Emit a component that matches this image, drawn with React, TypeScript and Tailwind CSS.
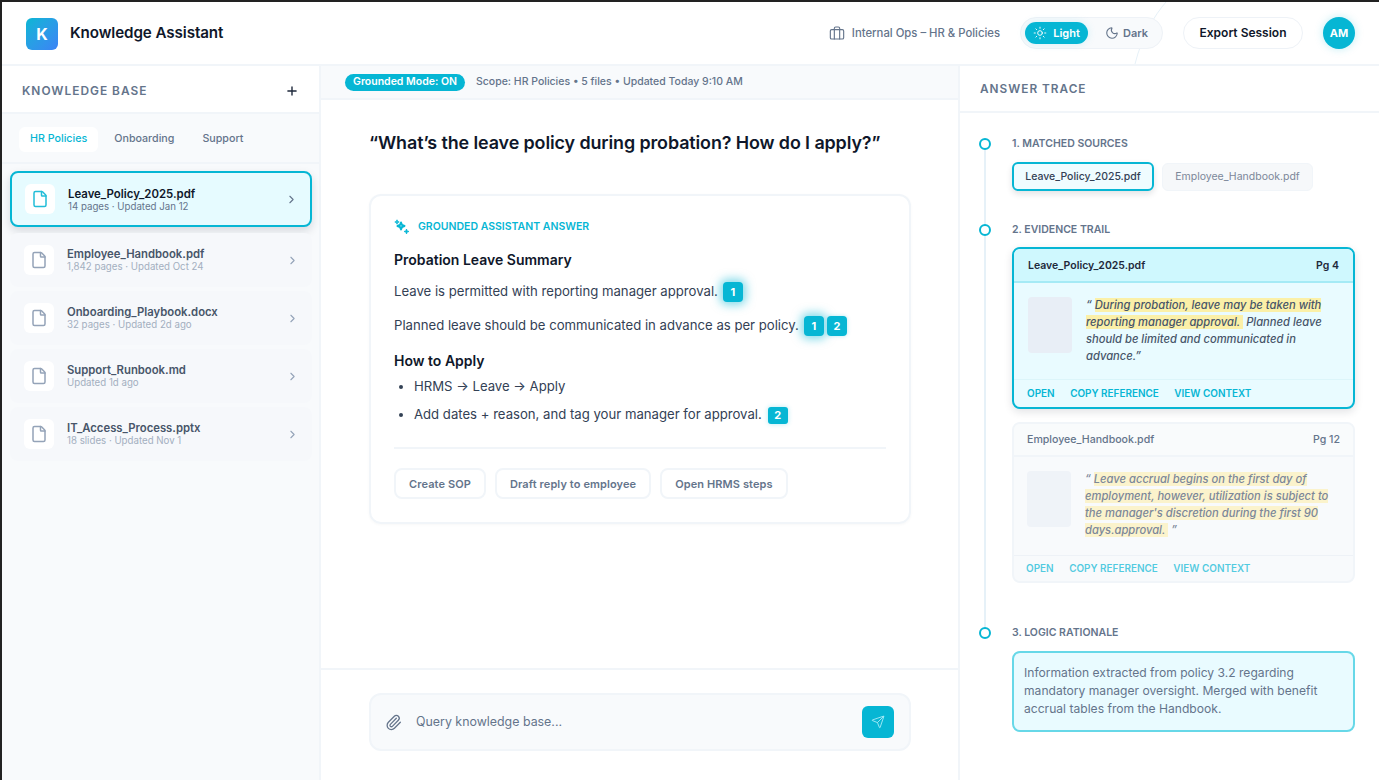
import { ChevronRight, File, Moon, Paperclip, Plus, Send, Sun } from 'lucide-react';

const files = [
  { name: 'Employee_Handbook.pdf', meta: '1,842 pages · Updated Oct 24' },
  { name: 'Onboarding_Playbook.docx', meta: '32 pages · Updated 2d ago' },
  { name: 'Support_Runbook.md', meta: 'Updated 1d ago' },
  { name: 'IT_Access_Process.pptx', meta: '18 slides · Updated Nov 1' },
];

const Cite = ({ n, glow }: { n: number; glow?: boolean }) => (
  <span
    className={`inline-flex items-center justify-center h-[20px] w-[20px] rounded-[4px] bg-[#06b6d4] text-white text-[11px] font-bold ${
      glow ? 'shadow-[0_0_10px_3px_rgba(6,182,212,0.5)]' : 'shadow-[0_0_4px_rgba(6,182,212,0.3)]'
    }`}
  >
    {n}
  </span>
);

const TraceActions = ({ faded }: { faded?: boolean }) => (
  <div className={`flex gap-[15.5px] text-[9.95px] font-semibold ${faded ? 'text-[#06b6d4]/70 border-[#eef2f7] pl-[12px] h-[26px]' : 'text-[#06b6d4] border-[#dcf5fa] pl-[13px] h-[28px]'} border-t items-center`}>
    <span>OPEN</span>
    <span>COPY REFERENCE</span>
    <span>VIEW CONTEXT</span>
  </div>
);

const SparkCluster = () => (
  <svg viewBox="0 0 16 16" className="w-4 h-4 text-[#06b6d4]" fill="none" stroke="currentColor" strokeWidth="2" strokeLinejoin="round">
    <path d="M7 3.5 L8 6 L10.5 7 L8 8 L7 10.5 L6 8 L3.5 7 L6 6 Z" />
    <path d="M3 .8 L3.6 2.4 L5.2 3 L3.6 3.6 L3 5.2 L2.4 3.6 L.8 3 L2.4 2.4 Z" fill="currentColor" strokeWidth="0.8" />
    <path d="M12.5 10 L13.1 11.9 L15 12.5 L13.1 13.1 L12.5 15 L11.9 13.1 L10 12.5 L11.9 11.9 Z" fill="currentColor" strokeWidth="0.8" />
  </svg>
);

const Case = () => (
  <svg viewBox="0 0 24 24" className="w-[16px] h-[16px] text-[#64748b]" fill="none" stroke="currentColor" strokeWidth="1.7" strokeLinecap="round" strokeLinejoin="round">
    <rect x="2" y="7" width="20" height="14" rx="2" />
    <path d="M16 21V5a2 2 0 0 0-2-2h-4a2 2 0 0 0-2 2v16" />
  </svg>
);

export default function App() {
  return (
    <div className="w-[1379px] h-[780px] overflow-hidden bg-white border-t-2 border-l-2 border-[#222] flex flex-col text-[#0f172a] font-['Inter',sans-serif]">
      {/* Header */}
      <header className="relative h-[64px] shrink-0 flex items-center border-b-2 border-[#f1f5f9] pl-6 pr-[24px]">
        {/* faint curve behind the toggle */}
        <svg className="absolute left-[1130px] top-0 w-[40px] h-[62px] pointer-events-none" viewBox="0 0 40 62" fill="none">
          <path d="M34 0 C 22 14 10 34 3 62" stroke="#e6f1f8" strokeWidth="1" />
        </svg>
        <div className="w-8 h-8 mt-[1px] rounded-md bg-gradient-to-br from-[#06b6d4] to-[#3b82f6] flex items-center justify-center text-white font-bold text-base">K</div>
        <div className="ml-3 mt-[1px] text-[15.2px] font-semibold tracking-[-0.1px]">Knowledge Assistant</div>
        <div className="ml-auto flex items-center">
          <Case />
          <span className="ml-[7px] text-[11.3px] font-medium text-[#64748b]">Internal Ops – HR &amp; Policies</span>
          <div className="relative ml-5 h-8 w-[143px] rounded-full bg-[#f8fafc] border border-[#eef2f7] flex items-center px-1 text-[11px] font-semibold">
            <div className="h-[22px] w-[63px] rounded-full bg-[#06b6d4] text-white flex items-center justify-center gap-[6px] shadow-[0_0_8px_rgba(6,182,212,0.15)]">
              <Sun className="w-[14px] h-[14px]" strokeWidth={1.6} />
              Light
            </div>
            <div className="ml-[17px] flex items-center gap-[4px] text-[#64748b]">
              <Moon className="w-[14px] h-[14px]" strokeWidth={1.9} />
              Dark
            </div>
          </div>
          <div className="relative ml-5 h-8 w-[120px] rounded-full bg-white border border-[#eef2f7] flex items-center justify-center text-xs font-semibold">Export Session</div>
          <div className="ml-5 w-8 h-8 rounded-full bg-[#06b6d4] text-white flex items-center justify-center text-[11px] font-bold shadow-[0_0_8px_rgba(6,182,212,0.25)]">AM</div>
        </div>
      </header>

      <div className="flex flex-1 min-h-0">
        {/* Knowledge base */}
        <aside className="w-[319px] shrink-0 border-r-2 border-[#f1f5f9] flex flex-col bg-[#f8fafc]">
          <div className="h-[48px] shrink-0 bg-white border-b-2 border-[#f1f5f9] flex items-center justify-between pl-5 pr-[20px] pt-[3px]">
            <span className="text-[11.9px] font-semibold tracking-[1px] text-[#64748b]">KNOWLEDGE BASE</span>
            <Plus className="w-[14px] h-[14px] text-[#1e293b]" strokeWidth={2.4} />
          </div>
          <div className="h-[50px] shrink-0 border-b-2 border-[#f1f5f9] flex items-center pl-[17px] pt-[3px] text-[10.7px] font-medium text-[#64748b]">
            <span className="h-[25px] px-[11px] rounded-md bg-white text-[#06b6d4] flex items-center">HR Policies</span>
            <span className="ml-[16px]">Onboarding</span>
            <span className="ml-[28px]">Support</span>
          </div>
          <div className="flex flex-col pl-2 pr-[7px] pt-[7px] gap-[4px]">
            <div className="h-[56px] rounded-lg border-2 border-[#06b6d4] bg-[#e6fbff] shadow-[0_4px_10px_rgba(15,23,42,0.14)] flex items-center pl-[13px] pr-[12px] mb-[2px]">
              <div className="w-[30px] h-[30px] rounded-md bg-white flex items-center justify-center">
                <File className="w-[18px] h-[18px] text-[#22bdd8]" strokeWidth={2} />
              </div>
              <div className="ml-[13px] flex-1 pt-[2px]">
                <div className="text-[11.4px] leading-[13px] font-semibold">Leave_Policy_2025.pdf</div>
                <div className="text-[9.7px] leading-[12px] text-[#64748b]">14 pages · Updated Jan 12</div>
              </div>
              <ChevronRight className="w-[13px] h-[13px] text-[#64748b]" strokeWidth={2} />
            </div>
            {files.map((f) => (
              <div key={f.name} className="h-[54px] rounded-lg bg-[#f6f8fb] flex items-center pl-[14px] pr-[13px]">
                <div className="w-[30px] h-[30px] rounded-md bg-white flex items-center justify-center">
                  <File className="w-[18px] h-[18px] text-[#94a3b8]" strokeWidth={2} />
                </div>
                <div className="ml-[13px] flex-1">
                  <div className="text-[11.3px] leading-[13px] font-semibold text-[#475569]">{f.name}</div>
                  <div className="text-[9.7px] leading-[12px] text-[#a3afbf]">{f.meta}</div>
                </div>
                <ChevronRight className="w-[13px] h-[13px] text-[#94a3b8]" strokeWidth={2} />
              </div>
            ))}
          </div>
        </aside>

        {/* Main column */}
        <main className="w-[637px] shrink-0 flex flex-col">
          <div className="h-[34px] shrink-0 bg-[#f8fafc] border-b-2 border-[#f1f5f9] flex items-center pl-6 text-[10.5px] text-[#64748b]">
            <span className="h-[17px] w-[120px] rounded-full bg-[#06b6d4] text-white font-semibold text-[10.5px] flex items-center justify-center">Grounded Mode: ON</span>
            <span className="ml-[11px] font-medium">Scope: HR Policies • 5 files • Updated Today 9:10 AM</span>
          </div>
          <div className="flex-1 px-12 pt-[31px] min-h-0">
            <h1 className="text-[17.9px] leading-[24px] font-semibold tracking-[-0.1px]">“What’s the leave policy during probation? How do I apply?”</h1>
            <div className="mt-[39px] w-[542px] h-[330px] rounded-xl border-2 border-[#f1f5f9] px-[23px] pt-[23px] shadow-[0_1px_3px_rgba(15,23,42,0.03)]">
              <div className="flex items-center gap-2 text-[10.5px] font-semibold text-[#06b6d4]">
                <SparkCluster />
                GROUNDED ASSISTANT ANSWER
              </div>
              <h2 className="mt-[16px] text-sm leading-[18px] font-semibold">Probation Leave Summary</h2>
              <div className="mt-[13px] flex items-center text-[13.15px] text-[#334155]">
                Leave is permitted with reporting manager approval.
                <span className="ml-[5px]"><Cite n={1} glow /></span>
              </div>
              <div className="mt-[14px] flex items-center text-[13.15px] text-[#334155]">
                Planned leave should be communicated in advance as per policy.
                <span className="ml-[5px] flex gap-[3px]"><Cite n={1} glow /><Cite n={2} /></span>
              </div>
              <h2 className="mt-[16px] text-sm leading-[18px] font-semibold">How to Apply</h2>
              <ul className="mt-[8px] list-disc pl-5 text-[13.15px] text-[#334155]">
                <li className="h-[19px] leading-[17px]">HRMS → Leave → Apply</li>
                <li className="mt-[8px] h-[19px]">
                  <div className="flex items-center">
                    Add dates + reason, and tag your manager for approval.
                    <span className="ml-[6px] inline-flex"><span className="inline-flex items-center justify-center h-[17px] w-[20px] rounded-[3px] bg-[#06b6d4] text-white text-[11px] font-bold shadow-[0_0_5px_rgba(6,182,212,0.3)]">2</span></span>
                  </div>
                </li>
              </ul>
              <div className="mt-[23px] pt-[19px] border-t-2 border-[#f1f5f9] flex gap-[9px] text-[11px] font-semibold tracking-[0.1px] text-[#64748b]">
                <span className="h-[31px] px-[13px] rounded-lg border-2 border-[#f1f5f9] flex items-center">Create SOP</span>
                <span className="h-[31px] px-[13px] rounded-lg border-2 border-[#f1f5f9] flex items-center">Draft reply to employee</span>
                <span className="h-[31px] px-[13px] rounded-lg border-2 border-[#f1f5f9] flex items-center">Open HRMS steps</span>
              </div>
            </div>
          </div>
          <div className="h-[112px] shrink-0 border-t-2 border-[#f1f5f9] px-12 pt-[23px]">
            <div className="w-[542px] h-[58px] rounded-xl bg-[#f8fafc] border-2 border-[#f1f5f9] flex items-center pl-[14px] pr-[15px]">
              <Paperclip className="w-[17px] h-[17px] text-[#64748b]" strokeWidth={1.8} />
              <span className="ml-[14px] text-[12.4px] text-[#64748b]">Query knowledge base...</span>
              <div className="ml-auto w-8 h-8 rounded-md bg-[#06b6d4] flex items-center justify-center">
                <Send className="w-[14px] h-[14px] text-[#a5eaf5]" strokeWidth={1.6} />
              </div>
            </div>
          </div>
        </main>

        {/* Answer trace */}
        <aside className="flex-1 min-w-0 border-l-2 border-[#f1f5f9] flex flex-col">
          <div className="h-[47px] shrink-0 border-b-2 border-[#f1f5f9] flex items-center pl-5 pt-[3px] text-[11.8px] font-semibold tracking-[1px] text-[#64748b]">ANSWER TRACE</div>
          <div className="relative flex-1 pl-[52px] pr-[24px] pt-[24px]">
            <div className="absolute left-[24px] top-[33px] w-[2px] h-[490px] bg-[#e6f1f8]" />
            <section className="relative">
              <span className="absolute -left-[33px] top-[1px] w-3 h-3 rounded-full bg-white border-2 border-[#06b6d4]" />
              <div className="text-[10.5px] leading-[14px] font-semibold text-[#64748b]">1. MATCHED SOURCES</div>
              <div className="mt-[11px] flex gap-[8px] items-center">
                <span className="h-[29px] w-[142px] rounded-md border-2 border-[#06b6d4] bg-[#effcff] flex items-center justify-center text-[10.5px] font-medium text-[#334155] shadow-[0_3px_6px_rgba(15,23,42,0.12)]">Leave_Policy_2025.pdf</span>
                <span className="h-[28px] w-[151px] rounded-md bg-[#f6f8fa] border border-[#f1f5f9] flex items-center justify-center text-[10.5px] text-[#7c8799]">Employee_Handbook.pdf</span>
              </div>
            </section>
            <section className="relative mt-[32px]">
              <span className="absolute -left-[33px] top-[1px] w-3 h-3 rounded-full bg-white border-2 border-[#06b6d4]" />
              <div className="text-[10.5px] leading-[14px] font-semibold text-[#64748b]">2. EVIDENCE TRAIL</div>
              <div className="mt-[10px] h-[162px] rounded-lg border-2 border-[#06b6d4] bg-[#e9fbff] overflow-hidden shadow-[0_3px_8px_rgba(15,23,42,0.12)]">
                <div className="h-[34px] bg-[#cff8fe] border-b-2 border-[#a5eaf5] flex items-center justify-between pl-[14px] pr-[14px] pt-[1px] text-[10.5px] font-semibold text-[#1e293b]">
                  <span>Leave_Policy_2025.pdf</span>
                  <span>Pg 4</span>
                </div>
                <div className="h-[96px] flex pl-[14px] pt-[14px]">
                  <div className="w-[44px] h-[56px] rounded bg-[#e8eef6] shrink-0" />
                  <p className="ml-[14px] w-[246px] italic text-[11.2px] leading-[17px] font-medium text-[#475569]">
                    “ <mark className="bg-[#fbf0a8] text-[#475569]">During probation, leave may be taken with reporting manager approval.&nbsp;</mark> Planned leave should be limited and communicated in advance.”
                  </p>
                </div>
                <TraceActions />
              </div>
              <div className="mt-[13px] h-[161px] rounded-lg border-2 border-[#f1f5f9] bg-[#f8fafc] overflow-hidden">
                <div className="h-[33px] bg-[#f9fbfc] border-b-2 border-[#f1f5f9] flex items-center justify-between pl-[13px] pr-[13px] text-[10.6px] font-medium text-[#64748b]">
                  <span>Employee_Handbook.pdf</span>
                  <span>Pg 12</span>
                </div>
                <div className="h-[98px] flex pl-[13px] pt-[14px]">
                  <div className="w-[44px] h-[56px] rounded bg-[#eff3f8] shrink-0" />
                  <p className="ml-[14px] w-[248px] italic text-[11.2px] leading-[17px] font-medium text-[#7c8799]">
                    “ <mark className="bg-[#fbf3cc] text-[#7c8799]">Leave accrual begins on the first day of employment, however, utilization is subject to the manager's discretion during the first 90 days.approval.&nbsp;</mark> ”
                  </p>
                </div>
                <TraceActions faded />
              </div>
            </section>
            <section className="relative mt-[43px]">
              <span className="absolute -left-[33px] top-[1px] w-3 h-3 rounded-full bg-white border-2 border-[#06b6d4]" />
              <div className="text-[10.5px] leading-[14px] font-semibold text-[#64748b]">3. LOGIC RATIONALE</div>
              <div className="mt-[11px] h-[81px] rounded-lg border-2 border-[#67d8e8] bg-[#e9fbff] pl-[10px] pr-3 pt-[11px] text-[12.1px] leading-[18px] text-[#64748b]">
                Information extracted from policy 3.2 regarding mandatory manager oversight. Merged with benefit accrual tables from the Handbook.
              </div>
            </section>
          </div>
        </aside>
      </div>
    </div>
  );
}
